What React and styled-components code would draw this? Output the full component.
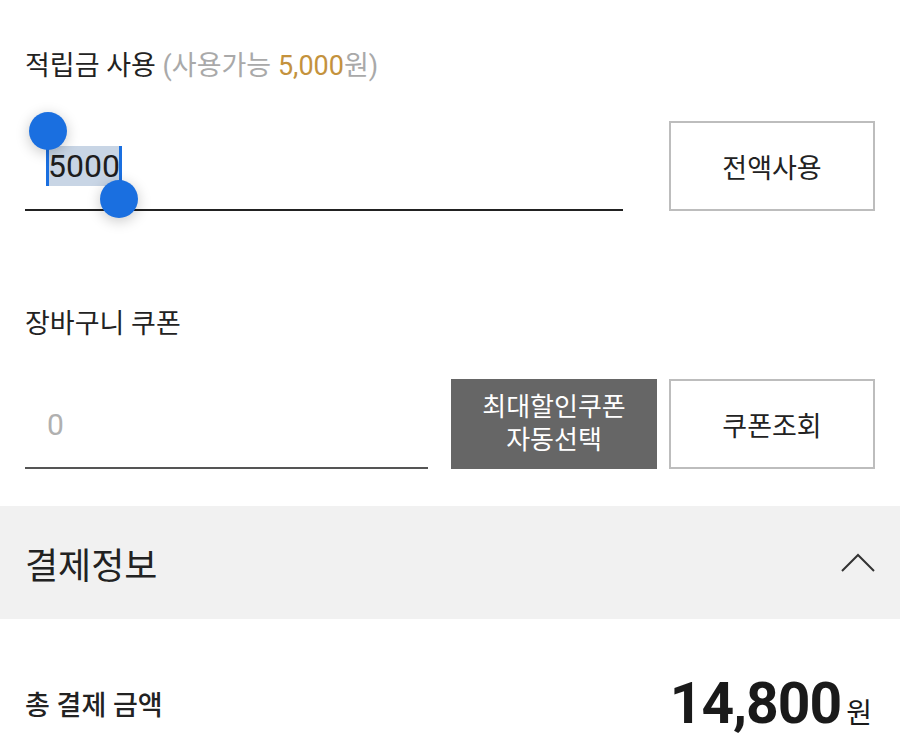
import React from 'react'
import styled, { createGlobalStyle } from 'styled-components'

const GlobalStyle = createGlobalStyle`
  body {
    margin: 0;
    background: #fff;
    font-family: Roboto, "Noto Sans CJK KR", sans-serif;
    color: #222;
  }
`

const Page = styled.div`
  width: 900px;
  padding-bottom: 20px;
`

const Field = styled.section`
  padding: ${({ top }) => top}px 25px 0;
`

const Label = styled.div`
  font-size: 27px;
  line-height: 34px;
  color: #222;
`

const Hint = styled.span`
  color: #a9a9a9;
`

const Gold = styled.span`
  color: #c4923d;
`

const Row = styled.div`
  display: flex;
  height: 90px;
  margin-top: 38px;
`

const InputBox = styled.div`
  width: ${({ width }) => width}px;
  margin-right: ${({ gap }) => gap}px;
  box-sizing: border-box;
  display: flex;
  align-items: center;
  padding: 2px 0 0 22px;
  border-bottom: 2px solid ${({ line }) => line};
  font-size: 32px;
`

const Placeholder = styled.span`
  color: #b0b0b0;
  font-size: 30px;
`

const Selected = styled.span`
  position: relative;
  display: inline-block;
  line-height: 40px;
  padding: 0 1px;
  background: #c8d5e5;
  color: #1d1d1d;
`

const Caret = styled.span`
  position: absolute;
  top: 0;
  ${({ side }) => side}: -1px;
  width: 3px;
  height: ${({ side }) => (side === 'left' ? 40 : 44)}px;
  background: #1a6fe0;
`

const Handle = styled.span`
  position: absolute;
  width: 38px;
  height: 38px;
  border-radius: 50%;
  background: #1a6fe0;
  box-shadow: 0 3px 14px rgba(0, 0, 0, 0.22);
  ${({ side }) =>
    side === 'left' ? 'left: -18px; top: -34px;' : 'right: -17px; top: 34px;'}
`

const OutlineButton = styled.button`
  width: 206px;
  height: 90px;
  box-sizing: border-box;
  border: 2px solid #bdbdbd;
  background: #fff;
  color: #222;
  font-family: inherit;
  font-size: 27px;
`

const DarkButton = styled.button`
  width: 206px;
  height: 90px;
  margin-right: 12px;
  border: 0;
  background: #666;
  color: #fff;
  font-family: inherit;
  font-size: 26px;
  line-height: 33px;
`

const SectionHead = styled.div`
  margin-top: 37px;
  height: 113px;
  padding: 0 25px;
  background: #f1f1f1;
  display: flex;
  align-items: center;
  justify-content: space-between;
  font-size: 36px;
  color: #222;
`

const TotalRow = styled.div`
  margin-top: 48px;
  padding: 0 25px 0 25px;
  height: 72px;
  display: flex;
  align-items: center;
  justify-content: space-between;
`

const TotalLabel = styled.span`
  font-size: 27px;
  font-weight: 500;
`

const Amount = styled.span`
  display: flex;
  align-items: baseline;
  margin-right: 3px;
  font-size: 57px;
  font-weight: 700;
  letter-spacing: -1px;
  color: #1a1a1a;
`

const Unit = styled.span`
  font-size: 28px;
  font-weight: 400;
  letter-spacing: 0;
  margin-left: 5px;
`

const App = () => {
  return (
    <Page>
      <GlobalStyle />
      <Field top={49}>
        <Label>
          적립금 사용 <Hint>(사용가능 <Gold>5,000</Gold>원)</Hint>
        </Label>
        <Row>
          <InputBox width={598} gap={46} line="#222">
            <Selected>
              5000
              <Caret side="left" />
              <Caret side="right" />
              <Handle side="left" />
              <Handle side="right" />
            </Selected>
          </InputBox>
          <OutlineButton>전액사용</OutlineButton>
        </Row>
      </Field>

      <Field top={96}>
        <Label>장바구니 쿠폰</Label>
        <Row>
          <InputBox width={403} gap={23} line="#555">
            <Placeholder>0</Placeholder>
          </InputBox>
          <DarkButton>
            최대할인쿠폰
            <br />
            자동선택
          </DarkButton>
          <OutlineButton>쿠폰조회</OutlineButton>
        </Row>
      </Field>

      <SectionHead>
        결제정보
        <svg width="34" height="20" viewBox="0 0 34 20" fill="none">
          <polyline points="1,18 17,2 33,18" stroke="#333" strokeWidth="2" />
        </svg>
      </SectionHead>

      <TotalRow>
        <TotalLabel>총 결제 금액</TotalLabel>
        <Amount>
          14,800<Unit>원</Unit>
        </Amount>
      </TotalRow>
    </Page>
  )
}

export default App
